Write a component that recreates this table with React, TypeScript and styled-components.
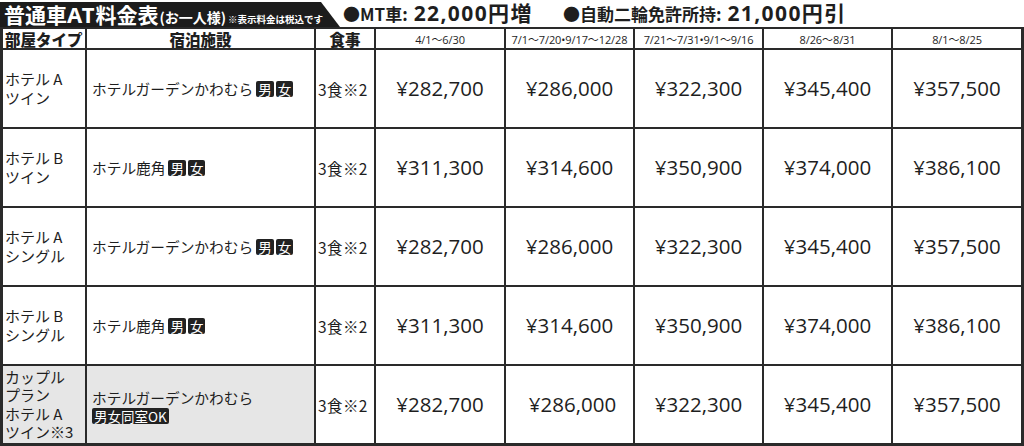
import React from "react";
import styled, { createGlobalStyle } from "styled-components";

const Global = createGlobalStyle`
  html, body { margin: 0; padding: 0; background: #fff; }
  body { font-family: "Open Sans", "Noto Sans CJK JP", sans-serif; color: #1e1e1e; }
`;

const Page = styled.div`
  width: 1024px;
  height: 446px;
  display: flex;
  flex-direction: column;
  overflow: hidden;
`;

const TopBar = styled.div`
  display: flex;
  align-items: flex-end;
  height: 27px;
`;

const TitleTab = styled.div`
  width: 340px;
  height: 25px;
  background: #1c1c1c;
  color: #fff;
  clip-path: polygon(0 0, 321px 0, 340px 100%, 0 100%);
  display: flex;
  align-items: baseline;
  padding-left: 4px;
  box-sizing: border-box;
  white-space: nowrap;
  font-family: "Noto Sans CJK JP", sans-serif;
  line-height: 25px;
`;

const TitleMain = styled.span`
  font-size: 21px;
  font-weight: 700;
`;

const TitleAT = styled.span`
  font-family: "Noto Sans", sans-serif;
  font-size: 22px;
  font-weight: 700;
  letter-spacing: 1px;
`;

const TitleSub = styled.span`
  font-size: 14px;
  font-weight: 700;
  margin-left: 1px;
`;

const TitleNote = styled.span`
  font-size: 9.5px;
  font-weight: 700;
  margin-left: 2px;
`;

const Extras = styled.div`
  height: 27px;
  display: flex;
  align-items: baseline;
  gap: 30px;
  margin-left: 3px;
  white-space: nowrap;
`;

const ExtraItem = styled.span`
  display: inline-flex;
  align-items: baseline;
`;

const ExtraLabel = styled.span`
  font-family: "Noto Sans CJK JP", sans-serif;
  font-size: 17px;
  line-height: 27px;
  font-weight: 700;
`;

const ExtraValue = styled.span`
  font-family: "Open Sans", "Noto Sans CJK JP", sans-serif;
  font-size: 21px;
  line-height: 27px;
  font-weight: 700;
  margin-left: 6px;
  letter-spacing: 1.4px;
`;

const Grid = styled.div`
  flex: 1;
  display: grid;
  grid-template-columns: 82px 227px 58px 128px 127px 127px 127px 128px;
  grid-template-rows: 19px repeat(5, 77px);
  gap: 2px;
  background: #2a2a2a;
  padding: 2px 3px 3px 3px;
`;

const Cell = styled.div<{ $shade?: boolean }>`
  background: ${(p) => (p.$shade ? "#e6e6e6" : "#fff")};
  display: flex;
  align-items: center;
  min-width: 0;
  overflow: hidden;
`;

const HeadCell = styled(Cell)<{ $left?: boolean }>`
  justify-content: ${(p) => (p.$left ? "flex-start" : "center")};
  padding-left: ${(p) => (p.$left ? "2px" : "0")};
  font-family: "Noto Sans CJK JP", sans-serif;
  font-size: 15.5px;
  font-weight: 900;
  line-height: 18px;
`;

const DateHead = styled(Cell)`
  justify-content: center;
  font-family: "Open Sans", "Noto Sans CJK JP", sans-serif;
  font-size: 11px;
  letter-spacing: -0.1px;
  white-space: nowrap;
`;

const TypeCell = styled(Cell)`
  padding-left: 2px;
  font-family: "Noto Sans CJK JP", sans-serif;
  font-size: 15px;
  line-height: 18.5px;
  white-space: pre-line;
`;

const HotelCell = styled(Cell)`
  padding-left: 5px;
  font-family: "Noto Sans CJK JP", sans-serif;
  font-size: 14.7px;
  line-height: 18px;
`;

const HotelInner = styled.div<{ $stack?: boolean }>`
  display: flex;
  flex-direction: ${(p) => (p.$stack ? "column" : "row")};
  align-items: ${(p) => (p.$stack ? "flex-start" : "center")};
  gap: ${(p) => (p.$stack ? "1px" : "2px")};
  margin-top: ${(p) => (p.$stack ? "4px" : "0")};
`;

const Badges = styled.span`
  display: inline-flex;
  gap: 2px;
  margin-left: 1px;
`;

const Badge = styled.span`
  background: #222;
  color: #fff;
  font-family: "Noto Sans CJK JP", sans-serif;
  font-size: 13.5px;
  line-height: 16px;
  padding: 0 2px;
  border-radius: 2px;
`;

const MealCell = styled(Cell)`
  padding-left: 2px;
  font-family: "Noto Sans CJK JP", sans-serif;
  font-size: 15.5px;
  letter-spacing: 0.4px;
  white-space: nowrap;
`;

const PriceCell = styled(Cell)<{ $shift?: number }>`
  justify-content: center;
  font-family: "Open Sans", sans-serif;
  font-size: 20.5px;
  padding-left: ${(p) => (p.$shift ? `${p.$shift}px` : "0")};
  padding-bottom: 1px;
`;

const dates = [
  "4/1〜6/30",
  "7/1〜7/20•9/17〜12/28",
  "7/21〜7/31•9/1〜9/16",
  "8/26〜8/31",
  "8/1〜8/25",
];

type Row = {
  type: string;
  hotel: string;
  couple?: boolean;
  prices: string[];
};

const pricesA = ["¥282,700", "¥286,000", "¥322,300", "¥345,400", "¥357,500"];
const pricesB = ["¥311,300", "¥314,600", "¥350,900", "¥374,000", "¥386,100"];

const rows: Row[] = [
  { type: "ホテル A\nツイン", hotel: "ホテルガーデンかわむら", prices: pricesA },
  { type: "ホテル B\nツイン", hotel: "ホテル鹿角", prices: pricesB },
  { type: "ホテル A\nシングル", hotel: "ホテルガーデンかわむら", prices: pricesA },
  { type: "ホテル B\nシングル", hotel: "ホテル鹿角", prices: pricesB },
  {
    type: "カップル\nプラン\nホテル A\nツイン※3",
    hotel: "ホテルガーデンかわむら",
    couple: true,
    prices: pricesA,
  },
];

export default function App() {
  return (
    <Page>
      <Global />
      <TopBar>
        <TitleTab>
          <TitleMain>普通車</TitleMain>
          <TitleAT>AT</TitleAT>
          <TitleMain>料金表</TitleMain>
          <TitleSub>(お一人様)</TitleSub>
          <TitleNote>※表示料金は税込です</TitleNote>
        </TitleTab>
        <Extras>
          <ExtraItem>
            <ExtraLabel>●MT車:</ExtraLabel>
            <ExtraValue>22,000円増</ExtraValue>
          </ExtraItem>
          <ExtraItem>
            <ExtraLabel>●自動二輪免許所持:</ExtraLabel>
            <ExtraValue>21,000円引</ExtraValue>
          </ExtraItem>
        </Extras>
      </TopBar>
      <Grid>
        <HeadCell $left>部屋タイプ</HeadCell>
        <HeadCell>宿泊施設</HeadCell>
        <HeadCell>食事</HeadCell>
        {dates.map((d) => (
          <DateHead key={d}>{d}</DateHead>
        ))}
        {rows.map((r, i) => (
          <React.Fragment key={i}>
            <TypeCell $shade={r.couple}>{r.type}</TypeCell>
            <HotelCell $shade={r.couple}>
              {r.couple ? (
                <HotelInner $stack>
                  <span>{r.hotel}</span>
                  <Badge>男女同室OK</Badge>
                </HotelInner>
              ) : (
                <HotelInner>
                  <span>{r.hotel}</span>
                  <Badges>
                    <Badge>男</Badge>
                    <Badge>女</Badge>
                  </Badges>
                </HotelInner>
              )}
            </HotelCell>
            <MealCell>3食※2</MealCell>
            {r.prices.map((p, j) => (
              <PriceCell key={j} $shift={r.couple && j === 1 ? 6 : 0}>
                {p}
              </PriceCell>
            ))}
          </React.Fragment>
        ))}
      </Grid>
    </Page>
  );
}
